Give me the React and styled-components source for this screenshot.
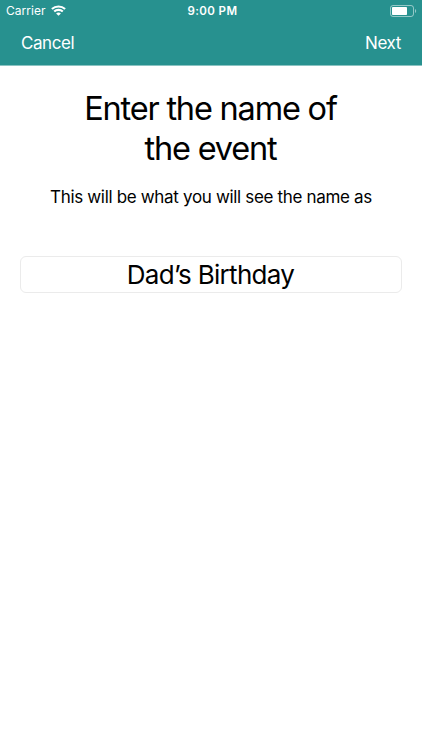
import styled, { createGlobalStyle } from "styled-components";

export default function App() {
  return (
    <Screen>
      <GlobalStyle />
      <Header>
        <StatusBar>
          <Carrier>
            Carrier
            <WifiIcon />
          </Carrier>
          <Clock>9:00 PM</Clock>
          <BatterySlot>
            <BatteryIcon />
          </BatterySlot>
        </StatusBar>
        <NavBar>
          <NavButton $spacing="-0.45px">Cancel</NavButton>
          <NavButton $spacing="-0.4px">Next</NavButton>
        </NavBar>
      </Header>
      <Content>
        <Title>
          Enter the name of
          <br />
          the event
        </Title>
        <Description>This will be what you will see the name as</Description>
        <NameInput type="text" defaultValue="Dad’s Birthday" aria-label="Event name" />
      </Content>
    </Screen>
  );
}

function WifiIcon() {
  return (
    <svg width="15" height="11" viewBox="0 0 15 11" fill="none" stroke="#fff" strokeWidth="2.1">
      <path d="M0.9 4.1C4.6 0.6 10.4 0.6 14.1 4.1" />
      <path d="M3.2 6.6C5.6 4.3 9.4 4.3 11.8 6.6" />
      <path d="M7.5 10.8L5.1 8.4C6.5 7.2 8.5 7.2 9.9 8.4Z" fill="#fff" stroke="none" />
    </svg>
  );
}

function BatteryIcon() {
  return (
    <svg width="27" height="12" viewBox="0 0 27 12" fill="none">
      <rect x="0.5" y="0.5" width="23" height="11" rx="2.5" stroke="#fff" strokeOpacity="0.5" />
      <rect x="2" y="2" width="15" height="8" rx="0.8" fill="#fff" />
      <path d="M25 4C26.6 4.6 26.6 7.4 25 8Z" fill="#fff" fillOpacity="0.5" />
    </svg>
  );
}

const GlobalStyle = createGlobalStyle`
  * {
    box-sizing: border-box;
  }
  body {
    margin: 0;
    background-color: #ffffff;
    font-family: Inter, "Liberation Sans", sans-serif;
  }
`;

const Screen = styled.div`
  display: flex;
  flex-direction: column;
  min-height: 100vh;
  background-color: #ffffff;
`;

const Header = styled.header`
  height: 66px;
  background-color: #27918f;
  border-bottom: 1px solid #8ac3c2;
  color: #ffffff;
`;

const StatusBar = styled.div`
  display: grid;
  grid-template-columns: 1fr auto 1fr;
  align-items: center;
  height: 21px;
  padding: 0 5px 0 6px;
`;

const Carrier = styled.div`
  display: flex;
  align-items: center;
  gap: 5px;
  font-size: 12px;
  letter-spacing: 0.05px;
`;

const Clock = styled.div`
  padding-left: 2px;
  font-size: 11.5px;
  font-weight: 600;
  letter-spacing: 0.4px;
`;

const BatterySlot = styled.div`
  display: flex;
  justify-content: flex-end;
`;

const NavBar = styled.nav`
  display: flex;
  align-items: center;
  justify-content: space-between;
  height: 43px;
  padding: 0 21px;
`;

const NavButton = styled.button`
  padding: 0;
  border: none;
  background: none;
  color: #ffffff;
  font-family: inherit;
  font-size: 17px;
  letter-spacing: ${(props) => props.$spacing};
  cursor: pointer;
`;

const Content = styled.main`
  display: flex;
  flex-direction: column;
  align-items: center;
  padding: 23px 20px 0;
`;

const Title = styled.h1`
  margin: 0;
  padding-right: 1px;
  font-size: 32.5px;
  font-weight: 400;
  line-height: 40px;
  letter-spacing: -1.2px;
  text-align: center;
  color: #000000;
`;

const Description = styled.p`
  margin: 17px 0 0;
  font-size: 17px;
  line-height: 22px;
  letter-spacing: -0.33px;
  text-align: center;
  white-space: nowrap;
  color: #000000;
`;

const NameInput = styled.input`
  width: 382px;
  height: 37px;
  margin-top: 48px;
  padding: 0 7px 0 6px;
  border: 1px solid #ebebeb;
  border-radius: 6px;
  outline: none;
  background-color: #ffffff;
  font-family: inherit;
  font-size: 26px;
  letter-spacing: -0.7px;
  text-align: center;
  color: #000000;
`;
